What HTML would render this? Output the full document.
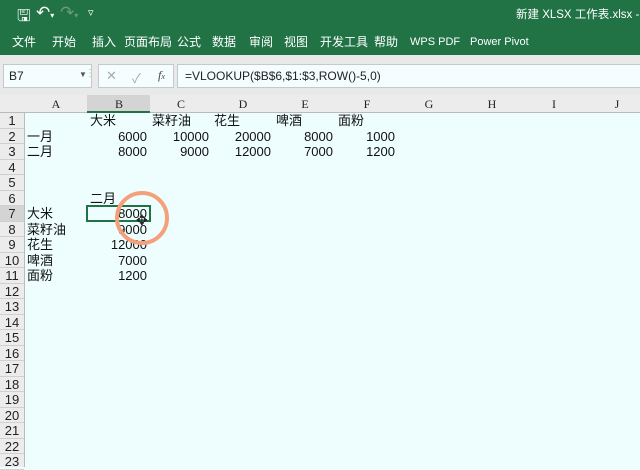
<!DOCTYPE html>
<html><head><meta charset="utf-8"><style>
*{margin:0;padding:0;box-sizing:border-box}
body{width:640px;height:467px;overflow:hidden;background:#eefefe;font-family:"Liberation Sans","Noto Sans CJK SC",sans-serif;position:relative}
.a{position:absolute;white-space:nowrap}
#top{position:absolute;left:0;top:0;width:640px;height:55px;background:#217346;color:#fff}
.tab{position:absolute;top:34px;font-size:12px;line-height:16px;color:#fff;white-space:nowrap}
#gray{position:absolute;left:0;top:55px;width:640px;height:40px;background:#e8eaea}
.box{position:absolute;background:#f4fefe;border:1px solid #c8c8c8}
#colh{position:absolute;left:0;top:95px;width:640px;height:18px;background:#ececec;border-bottom:1px solid #bbb}
.ch{position:absolute;top:97px;font-family:"Liberation Serif",serif;font-size:12px;color:#222;text-align:center;width:62px}
#rowh{position:absolute;left:0;top:113px;width:25px;height:354px;background:#ececec;border-right:1px solid #bbb}
.rh{position:absolute;left:0;width:24px;text-align:center;font-size:13px;color:#222;height:15.5px;line-height:15.5px;border-bottom:1px solid #d0d0d0}
.c{position:absolute;font-size:13px;color:#111;height:15.5px;line-height:15.5px;white-space:nowrap}
.r{text-align:right;width:60px}
</style></head><body>
<div id="top">
<div class="a" style="left:17px;top:5px;font-size:16px">🖫</div>
<div class="a" style="left:36px;top:3px;font-size:17px">↶<span style="font-size:8px">▾</span></div>
<div class="a" style="left:60px;top:3px;font-size:17px;color:#6a9a80">↷<span style="font-size:8px">▾</span></div>
<div class="a" style="left:88px;top:6px;font-size:11px">▿</div>
<div class="a" style="left:516px;top:6px;font-size:11.5px">新建 XLSX 工作表.xlsx -</div>
<div class="tab" style="left:12px">文件</div><div class="tab" style="left:52px">开始</div><div class="tab" style="left:92px">插入</div><div class="tab" style="left:124px">页面布局</div><div class="tab" style="left:177px">公式</div><div class="tab" style="left:212px">数据</div><div class="tab" style="left:249px">审阅</div><div class="tab" style="left:284px">视图</div><div class="tab" style="left:320px">开发工具</div><div class="tab" style="left:374px">帮助</div><div class="tab" style="left:410px;font-size:11px">WPS PDF</div><div class="tab" style="left:470px;font-size:11px">Power Pivot</div>
</div>
<div id="gray"></div>
<div class="box" style="left:3px;top:64px;width:89px;height:24px"></div>
<div class="a" style="left:9px;top:69px;font-size:12px;color:#222">B7</div>
<div class="a" style="left:79px;top:70px;font-size:8px;color:#555">▼</div>
<div class="a" style="left:85px;top:68px;font-size:10px;color:#aaa">⋮</div>
<div class="box" style="left:98px;top:64px;width:76px;height:24px"></div>
<div class="a" style="left:106px;top:68px;font-size:13px;color:#aaa">✕</div>
<div class="a" style="left:132px;top:68px;font-size:13px;color:#aaa">✓</div>
<div class="a" style="left:158px;top:68px;font-size:12px;font-style:italic;font-family:'Liberation Serif',serif;color:#444">f<span style="font-size:8px">x</span></div>
<div class="box" style="left:177px;top:64px;width:470px;height:24px"></div>
<div class="a" style="left:185px;top:69px;font-size:12px;color:#222">=VLOOKUP($B$6,$1:$3,ROW()-5,0)</div>
<div id="colh"></div>
<div class="a" style="left:87px;top:95px;width:63px;height:18px;background:#d4d4d4;border-bottom:2px solid #217346"></div>
<div class="ch" style="left:25px">A</div><div class="ch" style="left:88px">B</div><div class="ch" style="left:150px">C</div><div class="ch" style="left:212px">D</div><div class="ch" style="left:274px">E</div><div class="ch" style="left:336px">F</div><div class="ch" style="left:398px">G</div><div class="ch" style="left:461px">H</div><div class="ch" style="left:523px">I</div><div class="ch" style="left:586px">J</div>
<div id="rowh"></div>
<div class="rh" style="top:113px">1</div><div class="rh" style="top:128.5px">2</div><div class="rh" style="top:144px">3</div><div class="rh" style="top:159.5px">4</div><div class="rh" style="top:175px">5</div><div class="rh" style="top:190.5px">6</div><div class="rh" style="top:206px;background:#d4d4d4">7</div><div class="rh" style="top:221.5px">8</div><div class="rh" style="top:237px">9</div><div class="rh" style="top:252.5px">10</div><div class="rh" style="top:268px">11</div><div class="rh" style="top:283.5px">12</div><div class="rh" style="top:299px">13</div><div class="rh" style="top:314.5px">14</div><div class="rh" style="top:330px">15</div><div class="rh" style="top:345.5px">16</div><div class="rh" style="top:361px">17</div><div class="rh" style="top:376.5px">18</div><div class="rh" style="top:392px">19</div><div class="rh" style="top:407.5px">20</div><div class="rh" style="top:423px">21</div><div class="rh" style="top:438.5px">22</div><div class="rh" style="top:454px">23</div>
<div class="c" style="left:90px;top:113px">大米</div><div class="c" style="left:152px;top:113px">菜籽油</div><div class="c" style="left:214px;top:113px">花生</div><div class="c" style="left:276px;top:113px">啤酒</div><div class="c" style="left:338px;top:113px">面粉</div>
<div class="c" style="left:27px;top:128.5px">一月</div><div class="c r" style="left:87px;top:128.5px">6000</div><div class="c r" style="left:149px;top:128.5px">10000</div><div class="c r" style="left:211px;top:128.5px">20000</div><div class="c r" style="left:273px;top:128.5px">8000</div><div class="c r" style="left:335px;top:128.5px">1000</div>
<div class="c" style="left:27px;top:144px">二月</div><div class="c r" style="left:87px;top:144px">8000</div><div class="c r" style="left:149px;top:144px">9000</div><div class="c r" style="left:211px;top:144px">12000</div><div class="c r" style="left:273px;top:144px">7000</div><div class="c r" style="left:335px;top:144px">1200</div>
<div class="c" style="left:90px;top:190.5px">二月</div>
<div class="a" style="left:86px;top:205px;width:65px;height:17px;border:2px solid #217346"></div>
<div class="c" style="left:27px;top:206px">大米</div><div class="c r" style="left:87px;top:206px">8000</div>
<div class="c" style="left:27px;top:221.5px">菜籽油</div><div class="c r" style="left:87px;top:221.5px">9000</div>
<div class="c" style="left:27px;top:237px">花生</div><div class="c r" style="left:87px;top:237px">12000</div>
<div class="c" style="left:27px;top:252.5px">啤酒</div><div class="c r" style="left:87px;top:252.5px">7000</div>
<div class="c" style="left:27px;top:268px">面粉</div><div class="c r" style="left:87px;top:268px">1200</div>
<div class="a" style="left:115px;top:191px;width:54px;height:54px;border:4px solid #f4a07a;border-radius:50%"></div>
<div class="a" style="left:136px;top:212px;font-size:14px;color:#222">✥</div>
</body></html>
